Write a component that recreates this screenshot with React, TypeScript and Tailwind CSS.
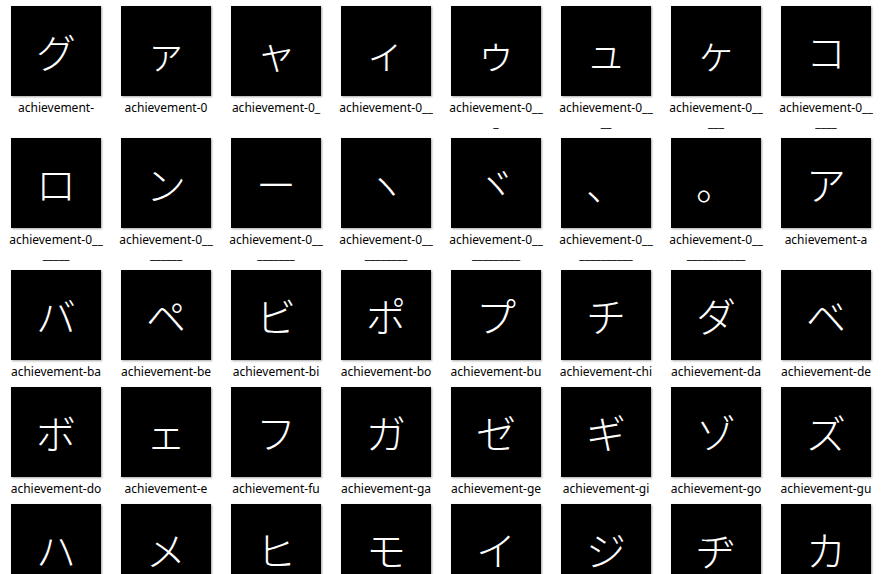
import * as React from "react";

type Item = { ch: string; label: string };

// achievement-0, achievement-0_, achievement-0__ ... each extra underscore is another file
const zeroRun = ["ァ", "ャ", "ィ", "ゥ", "ュ", "ヶ", "コ", "ロ", "ン", "ー", "ヽ", "ヾ", "、", "。"];

const items: Item[] = [
  { ch: "グ", label: "achievement-" },
  ...zeroRun.map((ch, i) => ({ ch, label: "achievement-0" + "_".repeat(i) })),
  { ch: "ア", label: "achievement-a" },
  { ch: "バ", label: "achievement-ba" },
  { ch: "ペ", label: "achievement-be" },
  { ch: "ビ", label: "achievement-bi" },
  { ch: "ポ", label: "achievement-bo" },
  { ch: "プ", label: "achievement-bu" },
  { ch: "チ", label: "achievement-chi" },
  { ch: "ダ", label: "achievement-da" },
  { ch: "ベ", label: "achievement-de" },
  { ch: "ボ", label: "achievement-do" },
  { ch: "ェ", label: "achievement-e" },
  { ch: "フ", label: "achievement-fu" },
  { ch: "ガ", label: "achievement-ga" },
  { ch: "ゼ", label: "achievement-ge" },
  { ch: "ギ", label: "achievement-gi" },
  { ch: "ゾ", label: "achievement-go" },
  { ch: "ズ", label: "achievement-gu" },
  { ch: "ハ", label: "achievement-ha" },
  { ch: "メ", label: "achievement-he" },
  { ch: "ヒ", label: "achievement-hi" },
  { ch: "モ", label: "achievement-ho" },
  { ch: "イ", label: "achievement-i" },
  { ch: "ジ", label: "achievement-ji" },
  { ch: "ヂ", label: "achievement-ji2" },
  { ch: "カ", label: "achievement-ka" },
];

/** Explorer wraps long names after "achievement-0__". */
function splitLabel(label: string): string[] {
  const head = "achievement-0__";
  if (label.startsWith(head) && label.length > head.length) {
    return [head, label.slice(head.length)];
  }
  return [label];
}

function Tile({ item }: { item: Item }) {
  return (
    <div className="flex w-[110px] flex-col items-center pb-[8px]">
      <div
        className="flex h-[90px] w-[90px] items-center justify-center bg-black text-[40px] font-light leading-none text-white shadow-[1px_1px_2px_rgba(0,0,0,0.35)]"
        style={{ fontFamily: '"Noto Sans CJK JP", sans-serif' }}
      >
        {item.ch}
      </div>
      <div
        className="mt-[4px] flex flex-col items-center text-[12px] leading-[15px] text-black"
        style={{ fontFamily: '"Noto Sans", "Liberation Sans", sans-serif' }}
      >
        {splitLabel(item.label).map((line, i) => (
          <span key={i} className="whitespace-pre">
            {line}
          </span>
        ))}
      </div>
    </div>
  );
}

export default function App() {
  return (
    <div className="h-[574px] w-[882px] overflow-hidden bg-white pl-px pt-[6px]">
      <div className="grid grid-cols-[repeat(8,110px)] items-start">
        {items.map((it, i) => (
          <Tile key={i} item={it} />
        ))}
      </div>
    </div>
  );
}
